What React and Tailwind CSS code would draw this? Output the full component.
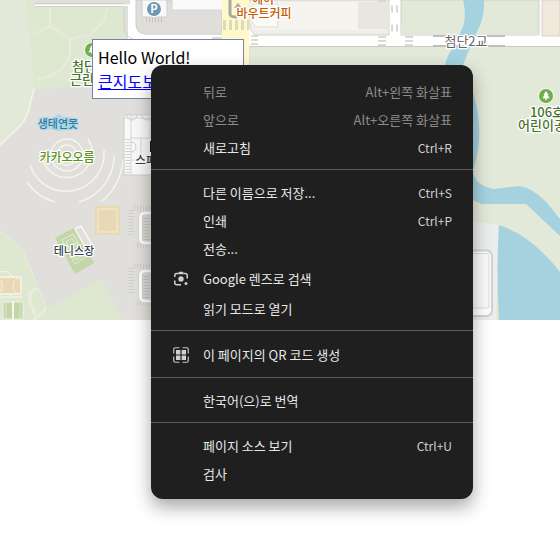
const label = {
  paintOrder: 'stroke',
  strokeLinejoin: 'round',
};

function MapLabel({ x, y, children, className = '', size = 'text-[12px]', halo = 'stroke-white' }) {
  return (
    <text
      x={x}
      y={y}
      textAnchor="middle"
      strokeWidth="2.5"
      style={label}
      className={`${size} ${halo} ${className}`}
    >
      {children}
    </text>
  );
}

function TreePin({ x, y }) {
  return (
    <g transform={`translate(${x} ${y})`}>
      <circle r="8" fill="#fff" opacity=".6" />
      <circle r="7" fill="#6fae4c" />
      <path d="M0-5 2.6-1H1.6L3.6 2.2H.7V4H-.7V2.2H-3.6L-1.6-1H-2.6Z" fill="#fff" />
    </g>
  );
}

function ParkedCars({ y }) {
  return (
    <g transform={`translate(128 ${y})`} fill="none">
      <path d="M3-7v26M9 28h16M6-9h18" stroke="#cfcdc8" strokeWidth="5" strokeDasharray="1 2" />
      <rect x="12.500" y="-4" width="36" height="30" rx="4" fill="#dbd9d5" stroke="#c9c8c5" strokeWidth="4" />
      <rect x="12.500" y="-4" width="36" height="30" rx="4" stroke="#fff" strokeWidth="3" />
      <path d="M18 1v22" stroke="#c6c4c0" strokeWidth="5" strokeDasharray="1 2" />
    </g>
  );
}

function MapCanvas() {
  return (
    <svg
      viewBox="0 0 560 320"
      preserveAspectRatio="xMinYMin slice"
      className="block h-[320px] w-full font-['Noto_Sans_CJK_KR','Noto_Sans',sans-serif]"
      role="img"
      aria-label="지도"
    >
      <rect width="560" height="320" fill="#e0dfdb" />
      <path d="M0 0H36V89L31 103Q30 115 22 124L0 145Z" fill="#e3e9d8" />
      <path d="M26 0H125V39L92 85 34 90 31 48Z" fill="#dee7cf" />
      <path d="M34 88 30 104Q28 117 20 126L0 145" fill="none" stroke="#f0f1e9" strokeWidth="2" />
      <g fill="none" stroke="#e6ebda" strokeWidth="2.5">
        <path d="M50 8V26L35 34M50 26 70 39 90 35 104 20 107 8M70 39V56Q62 76 36 80" />
      </g>

      <path d="M35 0H125V3H35Z" fill="#e0dfdb" />
      <path d="M35 4.500H130V0H560V46H180L128 39V6H35Z" fill="#fff" />
      <path d="M35 3.500H124M35 6.500H124V28Q125 37 133 39" fill="none" stroke="#d0d0cd" />
      <path d="M136 0H222V34H145Q136 33 136 24Z" fill="#dfdeda" stroke="#cdccc8" />
      <path d="M142 0H167V17H142Z" fill="#f8f8f8" stroke="#cfcfcc" />
      <rect x="172" y="-3" width="52" height="13" fill="#fafafa" stroke="#d6d5d1" />
      <path d="M146 20h18" stroke="#c7c5c1" strokeWidth="5" strokeDasharray="1 2" />
      <circle cx="154" cy="9" r="8" fill="#fff" />
      <circle cx="154" cy="9" r="7" fill="#6b98b2" />
      <text x="154" y="13" textAnchor="middle" className="fill-white text-[11px] font-bold">P</text>

      <path d="M222 0H249V66H222Z" fill="#fff9ca" />
      <path d="M222 34h-10M222 38h-10M251 36h7M251 40h7M251 44h7" stroke="#dedbd3" strokeWidth="2" />
      <path d="M223 25h26" stroke="#ddd9ba" strokeWidth="10" strokeDasharray="3 3" />
      <path d="M230 0v14q0 3 7 3M238 15V5" fill="none" stroke="#a6a8aa" strokeWidth="3" />
      <path d="M234 8l4-5 4 5Z" fill="#a6a8aa" />

      <path d="M250 0H389V35H255L250 29Z" fill="#eeeeea" stroke="#cfcfcb" />
      <path d="M250 2H389V26L383 30H256L250 23Z" fill="#f5f4ef" />
      <path d="M253 4H278V27H256L251 21Z" fill="#fafaf7" stroke="#dddcd8" />
      <rect x="358" y="2" width="31" height="27" fill="#e7e6df" />
      <path d="M378 1h8M378 37h8M378 41h8M378 45h8M405 37h8M405 41h8M405 45h8" stroke="#dcd8d2" strokeWidth="2" />
      <path d="M391 9h10M391 28h10" stroke="#dcd8d2" strokeWidth="7" strokeDasharray="2 3" />
      <path d="M401 0H539V35H401Z" fill="#e3e9d8" stroke="#cecfca" />
      <path d="M401 26 409 33H539V35H401Z" fill="#e4e5df" />
      <path d="M542 0H560V36H542Z" fill="#f0e8da" stroke="#d6d1c7" />

      <path d="M250 50 254 46H560V320H250Z" fill="#e3e9d8" />
      <path d="M250 46.500H560" stroke="#c9ccc4" />
      <path d="M463 0H484C485 16 480 26 474 38L463 65H445Q447 56 452 49L460 34Q468 18 463 0Z" fill="#a6d2e0" />
      <path d="M445 65H463C474 90 481 116 479 141Q478 155 473 171Q475 186 494 189L518 186Q532 187 548 204L560 219V236L543 220 526 204H482Q472 202 465 190V110Z" fill="#a6d2e0" />
      <path d="M433 36H505V46H433Z" fill="#fff" />
      <path d="M433 36H505M433 46H505" stroke="#bebfbd" strokeWidth="2" />
      <path d="M460 220 499 225 496 320H460Z" fill="#eaeeed" />
      <path d="M499 225Q532 236 560 272V320H499Q496 270 499 225Z" fill="#a6d2e0" />
      <path d="M460 250.500H487Q492 251 492 257V310Q492 316 486 316H460" fill="#fff" stroke="#d3d0d3" strokeWidth="2" />
      <path d="M460 253.500H489V308H460Z" fill="#fafafa" stroke="#dcd9db" />

      <g fill="none" stroke="#f5f4f1" strokeWidth="1.500">
        <circle cx="67" cy="155" r="10" />
        <circle cx="67" cy="155" r="16" />
        <path d="M42 151A25 25 0 1 0 88 139M30 165A38 38 0 0 0 104 150M27 182A48 48 0 0 0 55 202M79 202A48 48 0 0 0 114 155M101 202A58 58 0 0 0 123 159" />
      </g>
      <path d="M54 118Q58 111 63 117L75 118Q79 123 73 129L58 131 45 128 39 123 43 118Z" fill="#acd7e8" />

      <path d="M124 115H160V175H124Z" fill="#f8f8f7" stroke="#ceced0" />
      <path d="M124 118H160M131 115V175M131 138H160M131 160H160M141 138V159M150 118V138" fill="none" stroke="#d7d6d7" />
      <path d="M128 139v36" stroke="#d4d2d2" strokeWidth="5" strokeDasharray="1 2" />
      <path d="M127 115a5 5 0 0 0 10 0M142 115a5 5 0 0 0 10 0M131 142a5 5 0 0 1 0 10" fill="none" stroke="#ceced0" />

      <path d="M0 231 21 246 47 309 102 279 123 320H0Z" fill="#dee7cf" />
      <path d="M0 231Q17 243 24 253L47 309" fill="none" stroke="#e9ecdf" />
      <path d="M46 309 34 320M37 288 30 293V301L35 315M37 288" fill="none" stroke="#e9eddf" strokeWidth="3" />
      <rect x="95" y="206" width="25" height="29" fill="#e8d8b3" />
      <rect x="98" y="209" width="19" height="23" fill="none" stroke="#f5edda" />
      <path d="M55 238 75 227 94 263 75 274Z" fill="#c3d6a8" />
      <path d="M62 240 73 234 86 257 75 264ZM66 242 72 238 82 256 76 260ZM66 249 78 242" fill="none" stroke="#e4ecd5" />
      <path d="M75 229 81 226 91 243 88 252Z" fill="none" stroke="#f8f8f5" strokeWidth="1.500" />
      <rect x="-2" y="277" width="23" height="17" fill="#e8d8b3" stroke="#f6eee0" strokeWidth="2" />
      <path d="M21 278q-8 0-8 8t8 8M0 281h2v10H0" fill="none" stroke="#f7efdf" />
      <path d="M0 272q7-3 13 5M0 297h22" fill="none" stroke="#f7f7f2" />
      <rect x="3" y="302" width="20" height="17" fill="#c3d6a8" stroke="#eef3e5" />
      <path d="M13 301v19" stroke="#f5f7ef" strokeWidth="2" />
      <path d="M6 302v17M20 302v17" stroke="#dce6cc" />
      <ParkedCars y={217} />
      <ParkedCars y={275} />

      <TreePin x={92} y={50} />
      <TreePin x={546} y={96} />

      <MapLabel x={263} y={4} className="fill-[#c65d00] font-medium">에이</MapLabel>
      <MapLabel x={264} y={18} className="fill-[#c65d00] font-medium">바우트커피</MapLabel>
      <MapLabel x={466} y={46} size="text-[13px]" className="fill-[#666]">첨단2교</MapLabel>
      <MapLabel x={84} y={71} size="text-[13px]" className="fill-[#48732e] font-medium">첨단</MapLabel>
      <MapLabel x={82} y={84} size="text-[13px]" className="fill-[#48732e] font-medium">근린</MapLabel>
      <MapLabel x={58} y={128} size="text-[11px]" halo="stroke-[#acd7e8]" className="fill-[#327b9e] font-medium">생태연못</MapLabel>
      <MapLabel x={67} y={162} className="fill-[#5c9419] font-medium">카카오오름</MapLabel>
      <MapLabel x={74} y={255} size="text-[11px]" className="fill-[#34434d] font-medium">테니스장</MapLabel>
      <MapLabel x={146} y={165} className="fill-[#34434d] font-medium">스페</MapLabel>
      <path d="M150 141h10v11h-10Z" fill="#15191d" />
      <MapLabel x={547} y={117} size="text-[13px]" className="fill-[#48732e] font-medium">106호</MapLabel>
      <MapLabel x={542} y={130} size="text-[13px]" className="fill-[#48732e] font-medium">어린이공</MapLabel>
    </svg>
  );
}

function LensIcon() {
  return (
    <svg viewBox="0 0 16 16" className="size-4" fill="none" stroke="#d0d0d0" strokeWidth="1.500" aria-hidden="true">
      <path d="M1.750 6V4.500Q1.750 2.500 3.700 2.500H5.200M10.800 2.500H12.300Q14.250 2.500 14.250 4.500V7.500M1.750 9.500V11.800Q1.750 13.750 3.700 13.750H8" />
      <path d="M4.800 3.200 6 .8H10L11.200 3.200Z" fill="#d0d0d0" stroke="none" />
      <circle cx="8" cy="8" r="2.700" fill="#d0d0d0" stroke="none" />
      <circle cx="13" cy="12.500" r="1.500" fill="#d0d0d0" stroke="none" />
    </svg>
  );
}

function QrIcon() {
  return (
    <svg viewBox="0 0 16 16" className="size-4" aria-hidden="true">
      <path d="M6.500 .75H2.200Q.75 .75 .75 2.200V6.500M9.500 .75H13.800Q15.250 .75 15.250 2.200V6.500M.75 9.500V13.800Q.75 15.250 2.200 15.250H6.500M15.250 9.500V13.800Q15.250 15.250 13.800 15.250H9.500" fill="none" stroke="#c4c4c4" strokeWidth="1.200" />
      <path d="M3 3H7.400V7.400H3ZM8.600 3H13V7.400H8.600ZM3 8.600H7.400V13H3ZM8.600 8.600H13V13H8.600Z" fill="#d0d0d0" />
    </svg>
  );
}

const groups = [
  [
    { text: '뒤로', keys: 'Alt+왼쪽 화살표', disabled: true },
    { text: '앞으로', keys: 'Alt+오른쪽 화살표', disabled: true },
    { text: '새로고침', keys: 'Ctrl+R' },
  ],
  [
    { text: '다른 이름으로 저장...', keys: 'Ctrl+S' },
    { text: '인쇄', keys: 'Ctrl+P' },
    { text: '전송...' },
    { text: 'Google 렌즈로 검색', icon: <LensIcon />, height: 'h-8' },
    { text: '읽기 모드로 열기' },
  ],
  [{ text: '이 페이지의 QR 코드 생성', icon: <QrIcon />, height: 'h-[30px]' }],
  [{ text: '한국어(으)로 번역' }],
  [{ text: '페이지 소스 보기', keys: 'Ctrl+U' }, { text: '검사' }],
];

function MenuItem({ text, keys, icon, disabled, height = 'h-7' }) {
  return (
    <button
      type="button"
      role="menuitem"
      disabled={disabled}
      className={`flex w-full items-center pr-[21px] pl-[22px] text-left text-[#e8e8e8] disabled:text-[#8b8b8b] ${height}`}
    >
      <span className="w-[30px] shrink-0">{icon}</span>
      <span className="grow whitespace-nowrap">{text}</span>
      {keys && <span className={`whitespace-nowrap ${disabled ? '' : 'text-[12px] text-[#cfcfcf]'}`}>{keys}</span>}
    </button>
  );
}

function ContextMenu() {
  return (
    <div
      role="menu"
      className="absolute top-[65px] left-[151px] w-[322px] rounded-xl bg-[#1f1f1f] pt-[13px] pb-[11px] font-['Noto_Sans_CJK_KR','Noto_Sans',sans-serif] text-[13px] leading-4 shadow-[0_8px_18px_rgba(0,0,0,0.35)]"
    >
      {groups.map((items, i) => (
        <div key={i}>
          {i > 0 && <hr className="mt-[7px] mb-[9px] border-t border-[#5c5c5c]" />}
          {items.map((item) => (
            <MenuItem key={item.text} {...item} />
          ))}
        </div>
      ))}
    </div>
  );
}

export default function App() {
  return (
    <main className="relative min-h-screen overflow-hidden bg-white">
      <MapCanvas />
      <div className="absolute top-[39px] left-[92px] h-[60px] w-[152px] border border-[#7683ac] bg-white p-[5px] font-['Noto_Sans_CJK_KR','Noto_Sans',sans-serif] text-base leading-6 text-black">
        <p>Hello World!</p>
        <a href="#map" className="whitespace-nowrap text-[#0000ff] underline">큰지도보기</a>
      </div>
      <ContextMenu />
    </main>
  );
}
